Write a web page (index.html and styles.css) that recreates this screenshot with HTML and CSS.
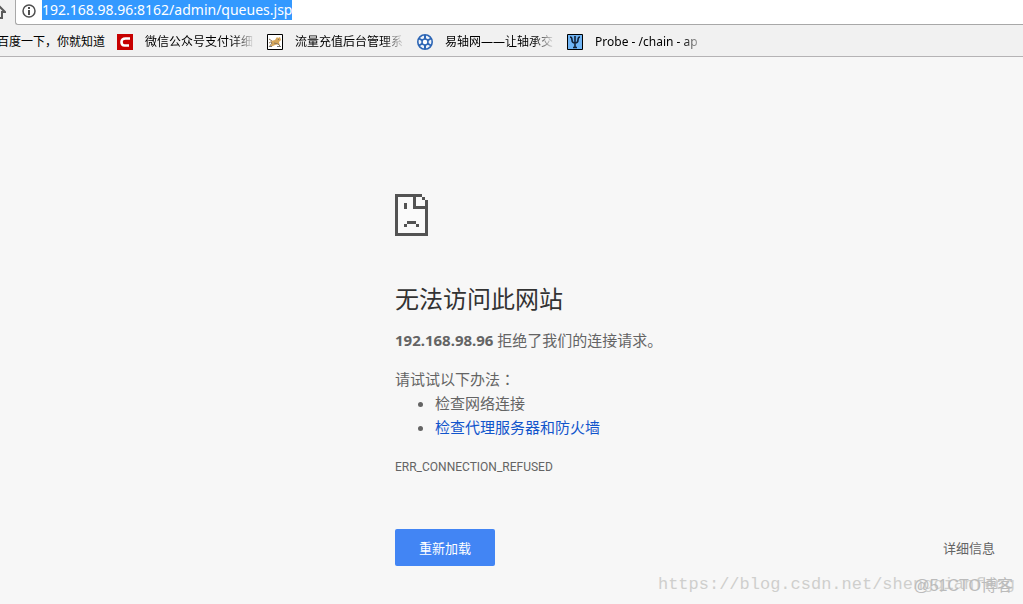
FILE: index.html
```html
<!DOCTYPE html>
<html lang="zh-CN">
<head>
<meta charset="utf-8">
<title>无法访问此网站</title>
<link rel="stylesheet" href="styles.css">
</head>
<body>
<header class="browser">
  <div class="toolbar">
    <button class="home" aria-label="主页">
      <svg width="6" height="24" viewBox="0 0 6 24"><path d="M-8 12L-1.500 5.500L5 12H2V18H-5" fill="none" stroke="#5a5a5a" stroke-width="2"/></svg>
    </button>
    <div class="omnibox">
      <svg class="info" width="14" height="14" viewBox="0 0 14 14"><circle cx="7" cy="7" r="6" fill="none" stroke="#4f4f4f" stroke-width="1.500"/><path d="M6 3h2v2H6zM6 6h2v5H6z" fill="#4f4f4f"/></svg>
      <input class="url" type="text" aria-label="地址" size="32" value="192.168.98.96:8162/admin/queues.jsp">
    </div>
  </div>
  <nav class="bookmarks">
    <a class="bookmark first" href="#"><span class="label whole">百度一下，你就知道</span></a>
    <a class="bookmark" href="#">
      <svg width="16" height="16" viewBox="0 0 16 16"><path fill="#c70000" d="M0 0h16v16H0z"/><path d="M13 4.500H8.500Q4.500 4.500 4.500 8T7.500 11.500H12" fill="none" stroke="#fff" stroke-width="2.600"/></svg>
      <span class="label">微信公众号支付详细</span></a>
    <a class="bookmark" href="#">
      <svg width="16" height="16" viewBox="0 0 16 16"><path fill="#fff" stroke="#000" d="M.5.5h15v15H.5z"/><path fill="#d5a65a" d="M4 7l4-1 2-3 1 1 2-1 1 3-2 2 1 4-2-2-3 1-2 1-4 1 3-3z"/><path fill="none" stroke="#8b765a" d="M2 5l3 2M2 9q2-2 3 0l-3 4M7 9l4 1 3 3M11 5l1 1"/><path fill="#777" d="M2 12h3v1H2zM10 12h4v1h-4z"/></svg>
      <span class="label">流量充值后台管理系</span></a>
    <a class="bookmark" href="#">
      <svg width="16" height="16" viewBox="0 0 16 16"><circle cx="8" cy="8" r="7.200" fill="#eef3fa" stroke="#2d66b5" stroke-width="1.600"/><circle cx="8" cy="8" r="3" fill="#fff" stroke="#2d66b5" stroke-width="1.500"/><path d="M8 1v4M8 11v4M2 4.500l3.500 2M10.500 9.500l3.500 2M14 4.500l-3.500 2M5.500 9.500L2 11.500" stroke="#2d66b5" stroke-width="2"/></svg>
      <span class="label">易轴网——让轴承交</span></a>
    <a class="bookmark" href="#">
      <svg width="16" height="16" viewBox="0 0 16 16"><path fill="#70b5f5" stroke="#000" d="M.5.5h15v15H.5z"/><path d="M8 2v12M6 13.500h4M3 3q2 0 2 3t3 3q3 0 3-3t2-3" fill="none" stroke="#122238" stroke-width="1.600"/></svg>
      <span class="label">Probe - /chain - ap</span></a>
  </nav>
</header>
<main class="error">
  <svg class="sad" width="33" height="42" viewBox="0 0 11 14" shape-rendering="crispEdges"><path fill="#fafafa" d="M1 1h8v1h1v11H1z"/><path fill="#535353" d="M0 0h9v1H7v3h3V2h1v12H0V1zM1 1v12h9V5H6V1zM9 1h1v1H9zM3 3h1v2H3zM4 9h3v1H4zM3 10h1v1H3zM7 10h1v1H7z" fill-rule="evenodd"/></svg>
  <h1 class="title">无法访问此网站</h1>
  <p class="summary"><strong>192.168.98.96</strong> 拒绝了我们的连接请求。</p>
  <p class="try">请试试以下办法<span lang="zh-TW" class="centered">：</span></p>
  <ul class="tips">
    <li>检查网络连接</li>
    <li><a href="#">检查代理服务器和防火墙</a></li>
  </ul>
  <p class="code">ERR_CONNECTION_REFUSED</p>
  <div class="actions">
    <button class="reload">重新加载</button>
    <button class="details">详细信息</button>
  </div>
</main>
<div class="mark blog">https://blog.csdn.net/shengqianfeng</div>
<div class="mark site">@51CTO博客</div>
</body>
</html>
```
FILE: styles.css
```css
* { box-sizing: border-box; }
body {
  margin: 0;
  min-height: 100vh;
  position: relative;
  overflow: hidden;
  background: #f7f7f7;
  color: #646464;
  font-family: "Noto Sans", "Noto Sans CJK SC", sans-serif;
  font-size: 15px;
}
button { border: 0; padding: 0; font: inherit; cursor: pointer; }
.browser { background: #f1f1f1; border-bottom: 1px solid #b5b3b5; }
.toolbar { display: flex; height: 25px; }
.home { width: 15px; flex: none; background: none; display: flex; }
.omnibox {
  flex: 1;
  display: flex;
  align-items: flex-start;
  background: #fff;
  border: 1px solid #a8a8a8;
  border-width: 0 0 1px 1px;
  border-bottom-left-radius: 3px;
  padding-left: 6px;
}
.info { margin: 4px 6px 0 0; }
.url {
  field-sizing: content;
  border: 0;
  padding: 0;
  height: 20px;
  background: #3399ff;
  color: #fff;
  font: 14px/20px "Noto Sans", sans-serif;
  outline: 0;
}
.bookmarks { display: flex; height: 31px; align-items: center; gap: 12px; padding-top: 3px; }
.bookmark {
  display: flex;
  align-items: center;
  gap: 12px;
  color: #000;
  text-decoration: none;
  font-size: 12px;
  line-height: 20px;
  white-space: nowrap;
}
.bookmark svg { flex: none; }
.first { margin-left: -3px; }
.label {
  width: 110px;
  mask-image: linear-gradient(to right, #000 80%, transparent);
}
.whole { width: auto; mask-image: none; }
.error { width: 600px; max-width: 100%; margin: 137px 28px 0 auto; }
.sad { display: block; }
.title { margin: 45px 0 11px; color: #333; font-size: 24px; font-weight: 400; line-height: 36px; }
.summary, .try { margin: 0; line-height: 24px; }
.try { margin-top: 15px; }
.centered { font-family: "Noto Sans CJK TC", sans-serif; }
.tips { margin: 0; padding-left: 40px; line-height: 24px; }
.tips a { color: #1155cc; text-decoration: none; }
.code { margin: 19px 0 0; font: 12px/18px Roboto, sans-serif; }
.actions { display: flex; justify-content: space-between; align-items: center; margin-top: 53px; font-size: 13px; }
.reload { width: 100px; height: 37px; border-radius: 2px; background: #4285f4; color: #fff; }
.details { background: none; color: #646464; }
.mark { position: absolute; white-space: nowrap; pointer-events: none; }
.blog { right: 8px; bottom: 7px; color: #cfcfcd; font: 17px/24px "Liberation Mono", monospace; }
.site { right: 10px; bottom: 6px; color: #bbb; font: 16px/24px "Liberation Sans", "Noto Sans CJK SC", sans-serif; }
```
